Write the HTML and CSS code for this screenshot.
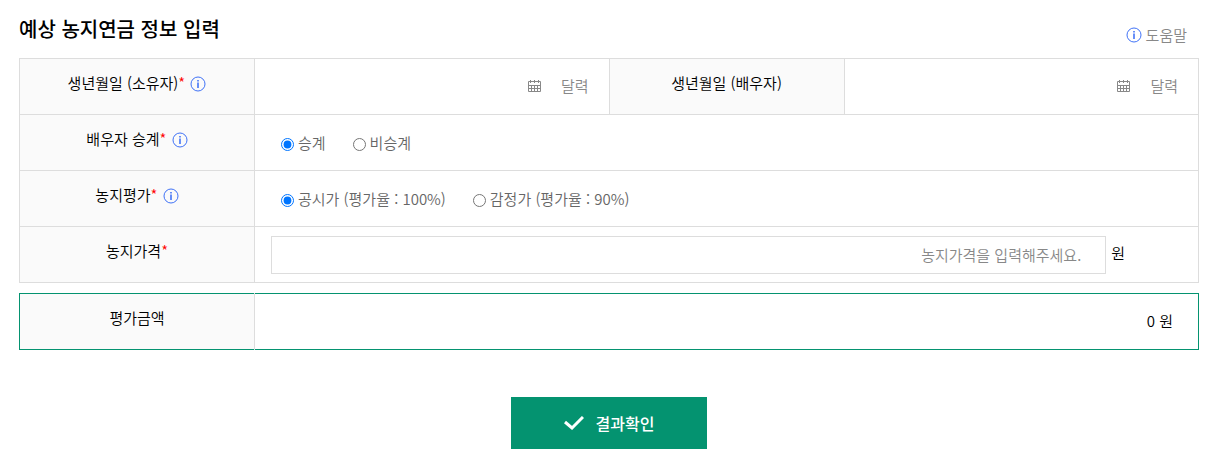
FILE: index.html
```html
<!DOCTYPE html>
<html lang="ko">
<head>
  <meta charset="UTF-8">
  <meta name="viewport" content="width=device-width, initial-scale=1">
  <title>예상 농지연금 정보 입력</title>
  <link rel="stylesheet" href="styles.css">
</head>
<body>

  <svg class="symbols" aria-hidden="true">
    <symbol id="icon-info" viewBox="0 0 16 16">
      <circle cx="8" cy="8" r="7" fill="none" stroke="currentColor" stroke-width=".9"/>
      <path d="M7.3 4h1.4v1.4H7.3zM7.3 6.5h1.4V12H7.3z" fill="currentColor"/>
    </symbol>
    <symbol id="icon-calendar" viewBox="0 0 13 13">
      <path d="M.5 1.5h12v10H.5zM0 5.5h13M0 8.5h13M3.5 5v7M6.5 5v7M9.5 5v7M2.5 0v3M6.5 0v3M10.5 0v3" fill="none" stroke="currentColor"/>
    </symbol>
  </svg>

  <form class="pension-form">
    <div class="form-head">
      <h3 class="form-title">예상 농지연금 정보 입력</h3>
      <button type="button" class="help-btn"><svg class="info-icon"><use href="#icon-info"/></svg>도움말</button>
    </div>

    <table class="form-table">
      <colgroup>
        <col class="col-label"><col class="col-value"><col class="col-label"><col class="col-value">
      </colgroup>
      <tr>
        <th scope="row">
          <label for="birthOwner">생년월일 (소유자)<span class="required">*</span></label>
          <button type="button" class="info-btn" aria-label="생년월일 도움말"><svg class="info-icon"><use href="#icon-info"/></svg></button>
        </th>
        <td>
          <div class="date-field">
            <input type="text" id="birthOwner" class="date-input" placeholder="달력">
            <button type="button" class="calendar-btn" aria-label="소유자 생년월일 선택"><svg class="calendar-icon"><use href="#icon-calendar"/></svg></button>
          </div>
        </td>
        <th scope="row"><label for="birthSpouse">생년월일 (배우자)</label></th>
        <td>
          <div class="date-field">
            <input type="text" id="birthSpouse" class="date-input" placeholder="달력">
            <button type="button" class="calendar-btn" aria-label="배우자 생년월일 선택"><svg class="calendar-icon"><use href="#icon-calendar"/></svg></button>
          </div>
        </td>
      </tr>
      <tr>
        <th scope="row">
          <span>배우자 승계<span class="required">*</span></span>
          <button type="button" class="info-btn" aria-label="배우자 승계 도움말"><svg class="info-icon"><use href="#icon-info"/></svg></button>
        </th>
        <td colspan="3">
          <div class="radio-group">
            <label class="radio"><input type="radio" name="succession" value="Y" checked>승계</label>
            <label class="radio"><input type="radio" name="succession" value="N">비승계</label>
          </div>
        </td>
      </tr>
      <tr>
        <th scope="row">
          <span>농지평가<span class="required">*</span></span>
          <button type="button" class="info-btn" aria-label="농지평가 도움말"><svg class="info-icon"><use href="#icon-info"/></svg></button>
        </th>
        <td colspan="3">
          <div class="radio-group">
            <label class="radio"><input type="radio" name="valuation" value="100" checked>공시가 (평가율 : 100%)</label>
            <label class="radio"><input type="radio" name="valuation" value="90">감정가 (평가율 : 90%)</label>
          </div>
        </td>
      </tr>
      <tr>
        <th scope="row"><label for="price">농지가격<span class="required">*</span></label></th>
        <td colspan="3">
          <div class="price-field">
            <input type="text" id="price" class="price-input" placeholder="농지가격을 입력해주세요.">
            <span class="unit">원</span>
          </div>
        </td>
      </tr>
    </table>

    <table class="form-table result-table">
      <colgroup>
        <col class="col-label"><col>
      </colgroup>
      <tr>
        <th scope="row">평가금액</th>
        <td><span id="amount">0</span> 원</td>
      </tr>
    </table>

    <div class="form-actions">
      <button type="button" class="submit-btn">
        <svg class="check-icon" viewBox="0 0 20 14" aria-hidden="true"><path d="M1 6l7 6L19 1" fill="none" stroke="currentColor" stroke-width="3"/></svg>
        결과확인
      </button>
    </div>
  </form>

  <script>
    const price = document.getElementById('price');

    function updateAmount() {
      const value = Number(price.value.replace(/[^0-9]/g, '')) || 0;
      const rate = Number(document.querySelector('input[name="valuation"]:checked').value);
      document.getElementById('amount').textContent = Math.floor(value * rate / 100).toLocaleString();
    }

    price.addEventListener('input', updateAmount);
    document.querySelectorAll('input[name="valuation"]').forEach(el => el.addEventListener('change', updateAmount));
  </script>

</body>
</html>
```
FILE: styles.css
```css
* {
  box-sizing: border-box;
}
body {
  margin: 0;
  background: #fff;
  color: #000;
  font-family: "Noto Sans CJK KR", "Noto Sans", sans-serif;
  font-size: 15px;
  font-weight: 350;
  line-height: 24px;
}
button, input {
  font: inherit;
}
button {
  padding: 0;
  border: 0;
  background: none;
  cursor: pointer;
}
.symbols {
  display: none;
}
.pension-form {
  padding: 14px 19px 24px;
}
.form-head {
  display: flex;
  justify-content: space-between;
  align-items: flex-start;
  height: 44px;
}
.form-title {
  margin: 0;
  font-size: 20px;
  font-weight: 500;
  line-height: 30px;
}
.help-btn {
  display: flex;
  align-items: center;
  gap: 4px;
  margin: 9px 12px 0 0;
  color: #888;
}
.info-icon {
  display: block;
  width: 16px;
  height: 16px;
  color: #2a62f5;
}

/* table */
.form-table {
  width: 100%;
  border-collapse: collapse;
  table-layout: fixed;
}
.col-label {
  width: 235px;
}
.form-table th,
.form-table td {
  height: 56px;
  border: 1px solid #ddd;
}
.form-table th {
  padding: 12px 8px;
  background: #fafafa;
  font-weight: inherit;
  text-align: center;
  vertical-align: top;
}
.form-table td {
  padding: 0 16px;
}
.required {
  color: #f00;
}
.info-btn {
  margin-left: 1px;
  vertical-align: -3px;
}

/* fields */
input::placeholder {
  color: #888;
  opacity: 1;
}
.date-field {
  position: relative;
}
.date-input {
  display: block;
  width: 100%;
  height: 38px;
  padding: 0 4px 2px;
  border: 0;
  background: none;
  text-align: right;
}
.date-input:not(:placeholder-shown) {
  padding-right: 72px;
}
.calendar-btn {
  position: absolute;
  top: 12px;
  right: 52px;
  color: #888;
}
.calendar-icon {
  display: block;
  width: 13px;
  height: 13px;
}
.radio-group {
  display: flex;
  gap: 27px;
  padding-left: 10px;
  color: #666;
}
.radio {
  display: flex;
  align-items: center;
  gap: 4px;
}
.radio input {
  width: 13px;
  height: 13px;
  margin: 3px 0 0;
}
.price-field {
  display: flex;
  align-items: center;
  gap: 5px;
  padding-right: 57px;
}
.price-input {
  flex: 1;
  min-width: 0;
  height: 38px;
  padding: 0 24px;
  border: 1px solid #ddd;
  text-align: right;
}
.unit {
  padding-bottom: 3px;
}

/* result */
.result-table {
  margin-top: 10px;
  border: 1px solid #049370;
}
.form-table.result-table th {
  border-width: 0 1px 0 0;
}
.form-table.result-table td {
  padding: 0 25px 2px;
  border: 0;
  text-align: right;
}
.form-actions {
  margin-top: 47px;
  text-align: center;
}
.submit-btn {
  display: inline-flex;
  justify-content: center;
  align-items: center;
  gap: 12px;
  width: 196px;
  height: 52px;
  background: #049370;
  color: #fff;
  font-size: 16px;
  font-weight: 500;
}
.check-icon {
  width: 20px;
  height: 14px;
}
```
